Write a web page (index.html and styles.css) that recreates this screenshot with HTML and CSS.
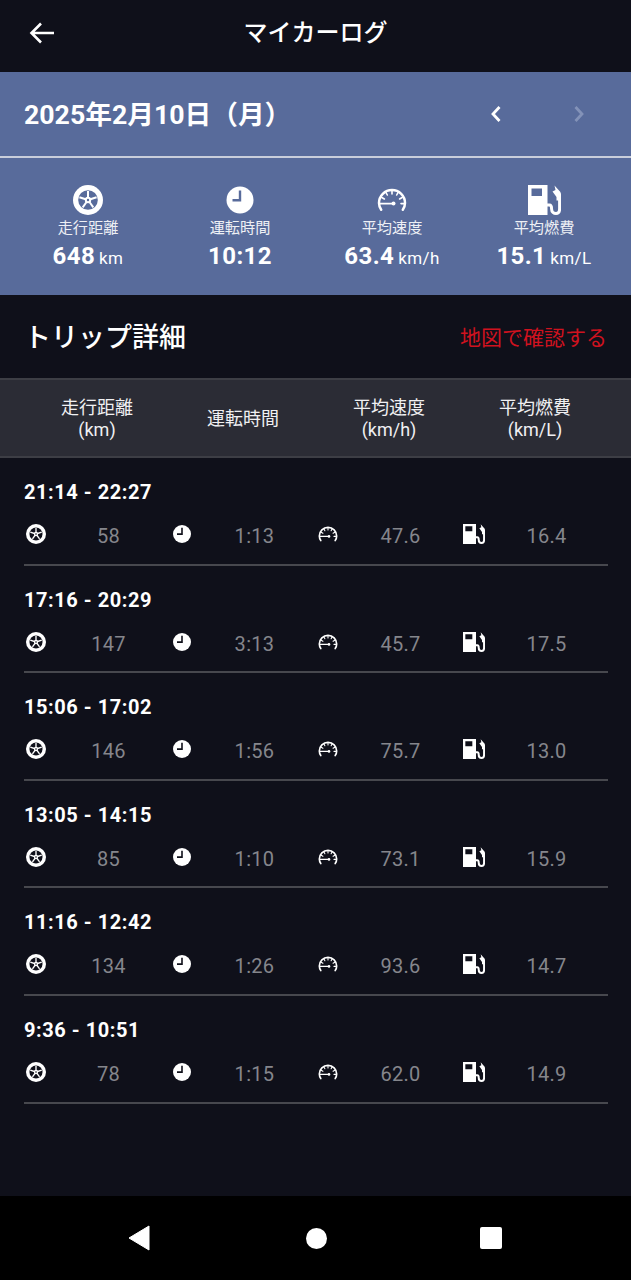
FILE: index.html
```html
<!DOCTYPE html>
<html lang="ja">
<head>
  <meta charset="UTF-8">
  <title>マイカーログ</title>
  <link rel="stylesheet" href="styles.css">
</head>
<body>

<svg class="sprites" width="0" height="0">
  <defs>
    <mask id="tireCut">
      <circle cx="15" cy="15" r="15" fill="#fff"/>
      <circle cx="15" cy="15" r="9.8" fill="#000"/>
      <g stroke="#fff" stroke-width="2">
        <path d="M15 15V6"/>
        <path d="M15 15L23.6 12.2"/>
        <path d="M15 15L20.3 22.3"/>
        <path d="M15 15L9.7 22.3"/>
        <path d="M15 15L6.4 12.2"/>
      </g>
      <circle cx="15" cy="15" r="3.2" fill="#fff"/>
      <circle cx="15" cy="15" r="1.2" fill="#000"/>
    </mask>
    <mask id="clockCut">
      <circle cx="15" cy="15" r="13.5" fill="#fff"/>
      <path d="M16.2 5.5V16.4H7.5V14H13.8V5.5Z" fill="#000"/>
    </mask>
    <symbol id="iconTire" viewBox="0 0 30 30">
      <rect width="30" height="30" fill="#fff" mask="url(#tireCut)"/>
    </symbol>
    <symbol id="iconClock" viewBox="0 0 30 30">
      <rect width="30" height="30" fill="#fff" mask="url(#clockCut)"/>
    </symbol>
    <symbol id="iconGauge" viewBox="0 0 30 30">
      <g fill="none" stroke="#fff" stroke-linecap="round">
        <path d="M4.2 24.8C2.9 22.9 2 20.6 2 18C2 10.8 7.8 5 15 5C22.2 5 28 10.8 28 18C28 20.6 27.2 22.9 25.8 24.8" stroke-width="2.5"/>
        <path d="M15 6V9M9 7.5L10.3 10M21 7.5L19.7 10M4.8 12.5L7.4 14M25.2 12.5L22.6 14" stroke-width="1.6"/>
        <path d="M3 18.6H15.5" stroke-width="1.9"/>
        <path d="M24 18.6H27" stroke-width="1.6"/>
      </g>
      <circle cx="16.5" cy="18.6" r="2" fill="#fff"/>
    </symbol>
    <symbol id="iconFuel" viewBox="0 0 33 30">
      <path fill="#fff" fill-rule="evenodd" d="M0 0H19.5V30H0ZM3.5 3.5V11H14V3.5Z"/>
      <path fill="none" stroke="#fff" stroke-width="3" d="M19 20H21.5C23.5 20 23.6 21.6 23.6 24C23.6 27 25.8 28.5 28 28.5C30.5 28.5 31.6 26.6 31.6 24V14"/>
      <path fill="#fff" d="M26.5 0.5L31.5 6C32.6 7.2 33 8 33 9.5V15.5H28.5V12L24.5 6.5L27.5 5Z"/>
    </symbol>
  </defs>
</svg>

<div class="screen">
  <header class="app-bar">
    <svg class="back-icon" width="26" height="22" viewBox="0 0 26 22"><path d="M12 1.5L2.5 11L12 20.5M3 11H25" fill="none" stroke="#fff" stroke-width="2.6"/></svg>
    <h1 class="app-title">マイカーログ</h1>
  </header>

  <section class="summary">
    <div class="date-row">
      <div class="date-text">2025年2月10日（月）</div>
      <div class="date-nav">
        <svg width="12" height="18" viewBox="0 0 12 18"><path d="M9.5 2L3 9L9.5 16" fill="none" stroke="#fff" stroke-width="2.8"/></svg>
        <svg width="12" height="18" viewBox="0 0 12 18"><path d="M2.5 2L9 9L2.5 16" fill="none" stroke="#8392b8" stroke-width="2.8"/></svg>
      </div>
    </div>
    <div class="stats">
      <div class="stat">
        <svg class="stat-icon" width="30" height="30"><use href="#iconTire"/></svg>
        <div class="stat-label">走行距離</div>
        <div class="stat-value">648<span class="unit">km</span></div>
      </div>
      <div class="stat">
        <svg class="stat-icon" width="30" height="30"><use href="#iconClock"/></svg>
        <div class="stat-label">運転時間</div>
        <div class="stat-value">10:12</div>
      </div>
      <div class="stat">
        <svg class="stat-icon" width="32" height="30"><use href="#iconGauge"/></svg>
        <div class="stat-label">平均速度</div>
        <div class="stat-value">63.4<span class="unit">km/h</span></div>
      </div>
      <div class="stat">
        <svg class="stat-icon" width="33" height="30"><use href="#iconFuel"/></svg>
        <div class="stat-label">平均燃費</div>
        <div class="stat-value">15.1<span class="unit">km/L</span></div>
      </div>
    </div>
  </section>

  <div class="trip-head">
    <h2 class="trip-title">トリップ詳細</h2>
    <a class="map-link">地図で確認する</a>
  </div>

  <div class="table-head">
    <div>走行距離<br>(km)</div>
    <div>運転時間</div>
    <div>平均速度<br>(km/h)</div>
    <div>平均燃費<br>(km/L)</div>
  </div>

  <main class="trips" id="trips"></main>

  <nav class="sys-nav">
    <svg width="22" height="26" viewBox="0 0 22 26"><path d="M21 1V25L1 13Z" fill="#fff" stroke="#fff" stroke-linejoin="round"/></svg>
    <span class="sys-home"></span>
    <span class="sys-recent"></span>
  </nav>
</div>

<script>
const trips = [
  ["21:14 - 22:27", "58", "1:13", "47.6", "16.4"],
  ["17:16 - 20:29", "147", "3:13", "45.7", "17.5"],
  ["15:06 - 17:02", "146", "1:56", "75.7", "13.0"],
  ["13:05 - 14:15", "85", "1:10", "73.1", "15.9"],
  ["11:16 - 12:42", "134", "1:26", "93.6", "14.7"],
  ["9:36 - 10:51", "78", "1:15", "62.0", "14.9"]
];

function cell(icon, w, value) {
  return `<div class="cell"><div class="cell-icon"><svg width="${w}" height="20"><use href="#${icon}"/></svg></div><div class="cell-value">${value}</div></div>`;
}

document.getElementById("trips").innerHTML = trips.map(t => `
  <div class="trip">
    <div class="trip-time">${t[0]}</div>
    <div class="trip-row">
      ${cell("iconTire", 20, t[1])}
      ${cell("iconClock", 20, t[2])}
      ${cell("iconGauge", 20, t[3])}
      ${cell("iconFuel", 22, t[4])}
    </div>
  </div>`).join("");
</script>

</body>
</html>
```

FILE: styles.css
```css
* { box-sizing: border-box; }
html, body { margin: 0; padding: 0; }
body { background-color: #0f101a; color: #fff; font-family: Roboto, "Noto Sans CJK JP", sans-serif; }
.sprites { position: absolute; }
.screen { width: 631px; height: 1280px; display: flex; flex-direction: column; }

.app-bar { height: 72px; flex: none; display: flex; align-items: center; justify-content: center; position: relative; padding-bottom: 7px; }
.back-icon { position: absolute; left: 29px; top: 22px; }
.app-title { margin: 0; font-size: 24px; font-weight: 500; line-height: 32px; }

.summary { background-color: #586b9b; flex: none; height: 223px; }
.date-row { height: 86px; display: flex; align-items: center; justify-content: space-between; padding: 0 46px 0 24px; border-bottom: 2px solid #c9cedb; }
.date-text { font-size: 26.7px; font-weight: 700; line-height: 32px; margin-top: 2px; }
.date-nav { display: flex; gap: 71px; }
.stats { display: grid; grid-template-columns: repeat(4, 152px); padding: 27px 12px 0; }
.stat { display: flex; flex-direction: column; align-items: center; }
.stat-icon { display: block; }
.stat-label { font-size: 15.2px; line-height: 20px; margin-top: 3px; color: #eef0f5; }
.stat-value { font-size: 24px; font-weight: 700; line-height: 30px; margin-top: 3px; letter-spacing: 0.4px; }
.unit { font-size: 17px; font-weight: 400; margin-left: 4px; }

.trip-head { height: 83px; flex: none; display: flex; align-items: center; justify-content: space-between; padding: 3px 24px 0; }
.trip-title { margin: 0; font-size: 27px; font-weight: 500; line-height: 36px; }
.map-link { color: #d0121f; font-size: 21px; line-height: 28px; }

.table-head { height: 80px; flex: none; display: grid; grid-template-columns: repeat(4, 146px); padding: 1px 24px 0; align-items: center; text-align: center; background-color: #2b2c35; border-top: 2px solid #3d3e45; border-bottom: 2px solid #3d3e45; font-size: 18px; line-height: 22px; color: #f0f0f2; }

.trips { flex: 1; padding: 0 23px 0 24px; }
.trip { height: 107.6px; border-bottom: 2px solid #47484e; padding-top: 20px; }
.trip-time { font-size: 20px; font-weight: 700; line-height: 28px; letter-spacing: 0.55px; }
.trip-row { display: grid; grid-template-columns: repeat(4, 146px); margin-top: 18px; }
.cell { display: grid; grid-template-columns: 49px 71px; align-items: center; }
.cell-icon { display: flex; align-items: center; padding-left: 2px; }
.cell-icon svg { display: block; margin-top: -4px; }
.cell:last-child .cell-icon { padding-left: 1px; }
.cell-value { text-align: center; font-size: 20px; line-height: 24px; color: #85868c; letter-spacing: 0.3px; }

.sys-nav { height: 84px; flex: none; background-color: #000; display: flex; align-items: center; padding: 0 0 0 128px; }
.sys-home { width: 21px; height: 21px; border-radius: 50%; background-color: #fff; margin-left: 156px; }
.sys-recent { width: 22px; height: 22px; border-radius: 2px; background-color: #fff; margin-left: 153px; }
```
